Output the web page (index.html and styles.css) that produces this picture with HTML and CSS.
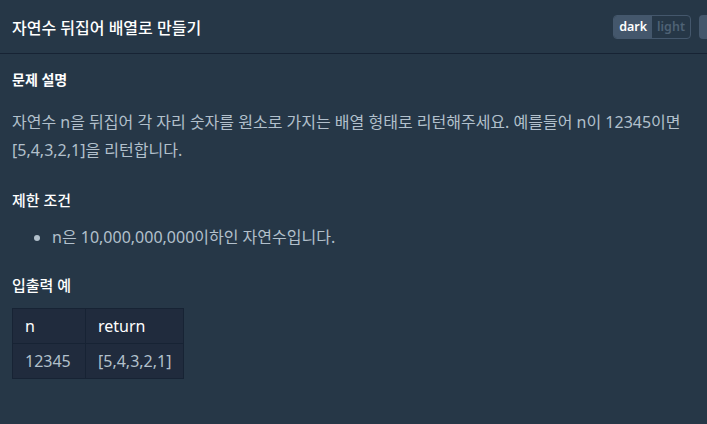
FILE: index.html
```html
<!DOCTYPE html>
<html lang="ko">

<head>
  <meta charset="UTF-8">
  <meta name="viewport" content="width=device-width, initial-scale=1.0">
  <title>자연수 뒤집어 배열로 만들기</title>
  <link rel="stylesheet" href="styles.css">
</head>

<body>
  <div id="header">
    <h1>자연수 뒤집어 배열로 만들기</h1>
    <div class="tools">
      <div class="theme">
        <span class="on">dark</span>
        <span>light</span>
      </div>
      <div class="more"></div>
    </div>
  </div>

  <div id="guide">
    <h5 class="first">문제 설명</h5>
    <p>자연수 n을 뒤집어 각 자리 숫자를 원소로 가지는 배열 형태로 리턴해주세요. 예를들어 n이 12345이면 [5,4,3,2,1]을 리턴합니다.</p>

    <h5>제한 조건</h5>
    <ul>
      <li>n은 10,000,000,000이하인 자연수입니다.</li>
    </ul>

    <h5>입출력 예</h5>
    <table>
      <tr>
        <th>n</th>
        <th>return</th>
      </tr>
      <tr>
        <td>12345</td>
        <td>[5,4,3,2,1]</td>
      </tr>
    </table>
  </div>
</body>

</html>
```

FILE: styles.css
```css
body {
  background-color: #263747;
  margin: 0;
  font-family: "Noto Sans", "Noto Sans CJK KR", sans-serif;
  color: #b2c0cc;
  overflow: hidden;
}

#header {
  display: flex;
  justify-content: space-between;
  align-items: center;
  height: 53px;
  border-bottom: 1px solid #172334;
  padding-left: 12px;
}

#header h1 {
  margin: 0;
  font-size: 16px;
  font-weight: 500;
  color: #ffffff;
}

.tools {
  display: flex;
  align-items: center;
  gap: 8px;
  margin-right: -8px;
}

.theme {
  display: flex;
  border: 1px solid #44576c;
  border-radius: 4px;
  overflow: hidden;
  height: 22px;
}

.theme span {
  display: flex;
  align-items: center;
  padding: 0 5px;
  font-size: 12.5px;
  font-weight: 600;
  color: #4e6275;
}

.theme span.on {
  background: #44576c;
  color: #ffffff;
}

.more {
  width: 16px;
  height: 24px;
  background: #44576c;
  border-radius: 4px;
}

#guide {
  padding: 0 12px;
}

h5 {
  margin: 0;
  font-size: 15px;
  font-weight: 500;
  color: #ffffff;
  line-height: 24px;
}

h5.first {
  margin-top: 14px;
  font-size: 14px;
  font-weight: 700;
}

p {
  margin: 16px 0 0;
  font-size: 16px;
  line-height: 28px;
}

p + h5 {
  margin-top: 24px;
}

ul {
  margin: 13px 0 0;
  padding-left: 40px;
  font-size: 16px;
  line-height: 24px;
}

ul + h5 {
  margin-top: 24px;
}

table {
  margin-top: 11px;
  border-collapse: collapse;
  background: #202b3d;
  font-size: 16px;
}

th,
td {
  border: 1px solid #172334;
  text-align: left;
  padding: 5px 12px;
  height: 24px;
}

th {
  font-weight: 400;
  color: #ffffff;
}

td:first-child,
th:first-child {
  width: 48px;
}

td:last-child,
th:last-child {
  width: 58px;
}
```
